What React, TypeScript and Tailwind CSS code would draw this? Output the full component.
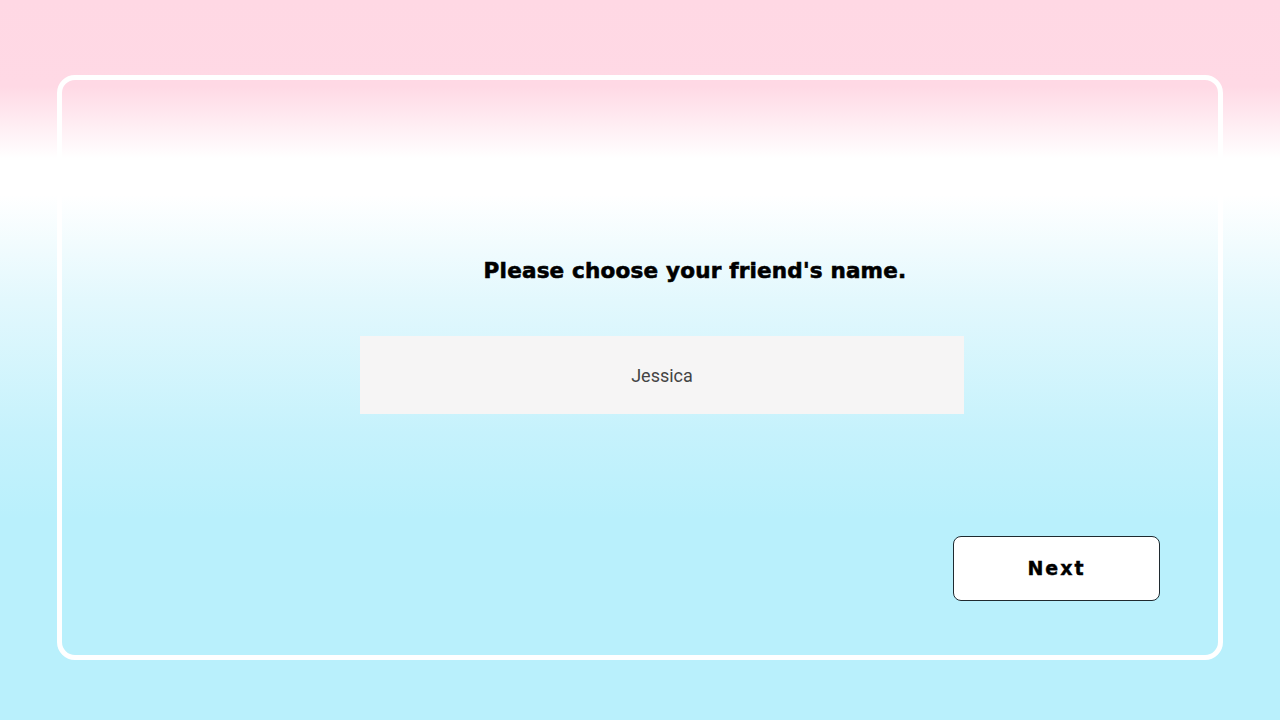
import React, { useState } from 'react';

const App = () => {
    const [name] = useState('Jessica');

    return (
        <div className="h-[720px] w-full overflow-hidden bg-[linear-gradient(to_bottom,#ffd8e4_0%,#ffd9e5_12%,#ffffff_22%,#ffffff_27%,#e2f8fd_42%,#c6f2fc_60%,#b9f0fc_72%,#b9f0fc_100%)] pt-[75px] px-[57px]">
            <div className="h-[585px] rounded-[18px] border-[5px] border-white flex flex-col">
                <div className="pt-[175px] pl-[110px] text-center">
                    <h1 className="text-[21.5px] font-black text-black tracking-[0.2px] [-webkit-text-stroke:0.6px_black]" style={{ fontFamily: '"DejaVu Sans", sans-serif' }}>
                        Please choose your friend's name.
                    </h1>
                </div>
                <div className="mt-[49px] ml-[298px] w-[604px] h-[78px] bg-[#f6f5f5] flex items-center justify-center">
                    <span className="text-[18px] text-[#444]" style={{ fontFamily: 'Roboto, sans-serif' }}>{name}</span>
                </div>
                <div className="mt-auto mb-[54px] mr-[58px] flex justify-end">
                    <button className="w-[207px] h-[65px] bg-white border border-[#1f2a30] rounded-[8px] text-[19px] font-bold tracking-[2px] text-black [-webkit-text-stroke:0.4px_black]" style={{ fontFamily: '"DejaVu Sans", sans-serif' }}>
                        Next
                    </button>
                </div>
            </div>
        </div>
    );
};

export default App;
